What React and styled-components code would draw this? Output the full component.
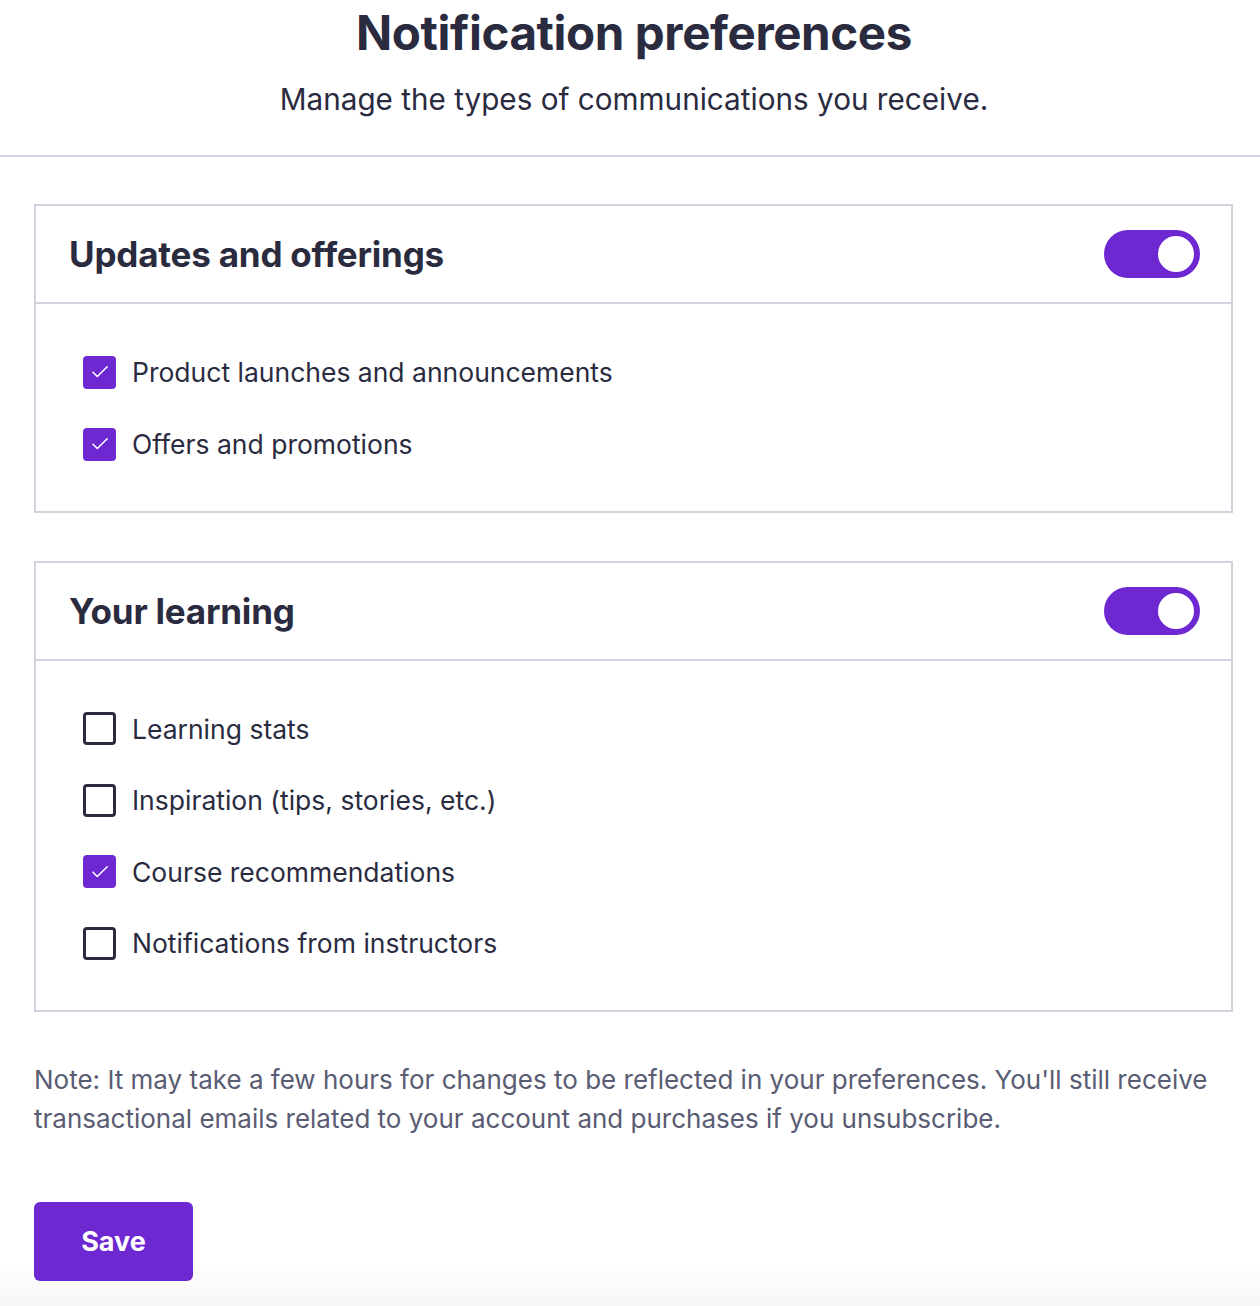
import React, { useState } from "react";
import styled, { createGlobalStyle } from "styled-components";

const Global = createGlobalStyle`
  html, body { margin: 0; padding: 0; background: #ffffff; }
  body { font-family: Inter, "Noto Sans", "Liberation Sans", sans-serif; color: #2a2b3f; }
  * { box-sizing: border-box; }
`;

const Page = styled.div`
  width: 1260px;
  min-height: 1306px;
  background: linear-gradient(to bottom, #ffffff 0, #ffffff calc(100% - 44px), #f6f6f7 100%);
`;

const Header = styled.header`
  display: flex;
  flex-direction: column;
  align-items: center;
  padding: 4px 0 0 8px;
  height: 157px;
  border-bottom: 2px solid #d1d2e0;
`;

const Title = styled.h1`
  margin: 0;
  font-size: 47.5px;
  line-height: 58px;
  font-weight: 700;
  letter-spacing: -0.4px;
  color: #2a2b3f;
`;

const Subtitle = styled.p`
  margin: 17px 0 0;
  font-size: 29.7px;
  line-height: 40px;
  font-weight: 400;
  color: #2a2b3f;
`;

const Content = styled.main`
  padding: 47px 27px 0 34px;
  display: flex;
  flex-direction: column;
`;

const Card = styled.section`
  border: 2px solid #d1d2e0;
  & + & { margin-top: 48px; }
`;

const CardHeader = styled.div`
  height: 98px;
  display: flex;
  align-items: center;
  justify-content: space-between;
  padding: 0 31px 0 33px;
  border-bottom: 2px solid #d1d2e0;
`;

const CardTitle = styled.h2`
  margin: 0;
  font-size: 35px;
  font-weight: 700;
  color: #2a2b3f;
  letter-spacing: -0.2px;
`;

const Toggle = styled.button`
  width: 96px;
  height: 48px;
  border-radius: 24px;
  border: none;
  padding: 0 6px;
  display: flex;
  align-items: center;
  justify-content: ${(p) => (p.$on ? "flex-end" : "flex-start")};
  background: ${(p) => (p.$on ? "#6d28d2" : "#9194ac")};
  cursor: pointer;
`;

const Knob = styled.span`
  width: 36px;
  height: 36px;
  border-radius: 50%;
  background: #fff;
`;

const CardBody = styled.div`
  padding: 32px 47px 31px;
  display: flex;
  flex-direction: column;
`;

const Row = styled.label`
  height: ${(p) => p.$h}px;
  display: flex;
  align-items: center;
  gap: 16px;
  font-size: 26.5px;
  color: #2a2b3f;
  cursor: pointer;
`;

const Box = styled.span`
  width: 33px;
  height: 33px;
  border-radius: 4px;
  flex: none;
  display: flex;
  align-items: center;
  justify-content: center;
  background: ${(p) => (p.$checked ? "#6d28d2" : "#fff")};
  border: ${(p) => (p.$checked ? "none" : "3px solid #2a2b3f")};
`;

const Note = styled.p`
  margin: 48px 0 0;
  font-size: 26px;
  line-height: 39px;
  color: #595c73;
`;

const SaveButton = styled.button`
  margin-top: 64px;
  width: 159px;
  height: 79px;
  border: none;
  border-radius: 6px;
  background: #6d28d2;
  color: #fff;
  font-family: inherit;
  font-size: 27px;
  font-weight: 700;
  cursor: pointer;
`;

function Check() {
  return (
    <svg width="32" height="32" viewBox="0 0 32 32" fill="none">
      <path d="M9 16.2 L13.3 20.5 L23.2 10.8" stroke="#fff" strokeWidth="1.6" strokeLinecap="round" strokeLinejoin="round" />
    </svg>
  );
}

function CheckRow({ label, checked, h, onToggle }) {
  return (
    <Row $h={h} onClick={onToggle}>
      <Box $checked={checked}>{checked && <Check />}</Box>
      <span>{label}</span>
    </Row>
  );
}

const sectionsInit = [
  {
    title: "Updates and offerings",
    on: true,
    h: 72,
    items: [
      { label: "Product launches and announcements", checked: true },
      { label: "Offers and promotions", checked: true },
    ],
  },
  {
    title: "Your learning",
    on: true,
    h: 71.5,
    items: [
      { label: "Learning stats", checked: false },
      { label: "Inspiration (tips, stories, etc.)", checked: false },
      { label: "Course recommendations", checked: true },
      { label: "Notifications from instructors", checked: false },
    ],
  },
];

export default function App() {
  const [sections, setSections] = useState(sectionsInit);

  const toggleSection = (si) =>
    setSections((s) => s.map((sec, i) => (i === si ? { ...sec, on: !sec.on } : sec)));
  const toggleItem = (si, ii) =>
    setSections((s) =>
      s.map((sec, i) =>
        i === si
          ? { ...sec, items: sec.items.map((it, j) => (j === ii ? { ...it, checked: !it.checked } : it)) }
          : sec
      )
    );

  return (
    <Page>
      <Global />
      <Header>
        <Title>Notification preferences</Title>
        <Subtitle>Manage the types of communications you receive.</Subtitle>
      </Header>
      <Content>
        {sections.map((sec, si) => (
          <Card key={sec.title}>
            <CardHeader>
              <CardTitle>{sec.title}</CardTitle>
              <Toggle $on={sec.on} onClick={() => toggleSection(si)} aria-pressed={sec.on}>
                <Knob />
              </Toggle>
            </CardHeader>
            <CardBody>
              {sec.items.map((it, ii) => (
                <CheckRow key={it.label} label={it.label} checked={it.checked} h={sec.h} onToggle={() => toggleItem(si, ii)} />
              ))}
            </CardBody>
          </Card>
        ))}
        <Note>
          Note: It may take a few hours for changes to be reflected in your preferences. You'll still receive
          transactional emails related to your account and purchases if you unsubscribe.
        </Note>
        <div>
          <SaveButton>Save</SaveButton>
        </div>
      </Content>
    </Page>
  );
}
